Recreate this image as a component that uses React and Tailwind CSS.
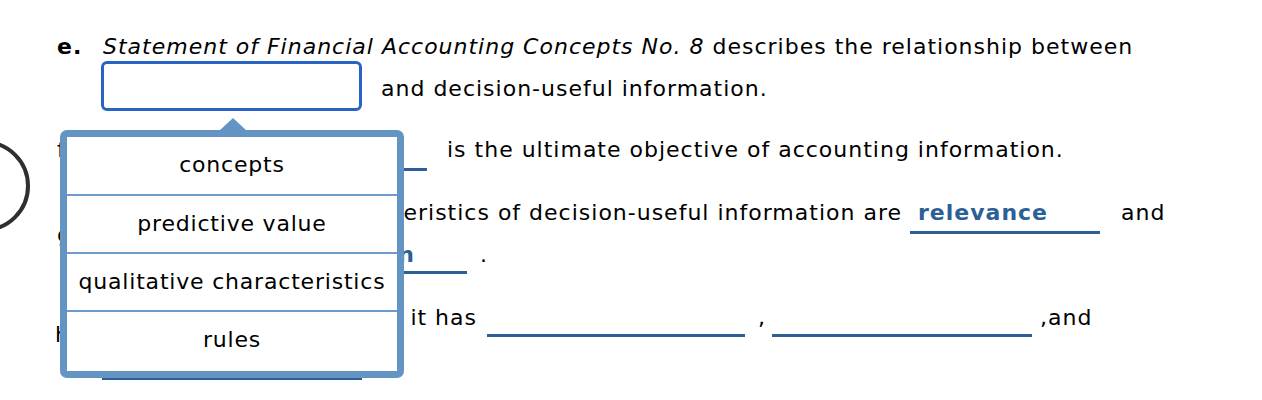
import React from "react";

const Blank = ({ w, className = "", children }) => (
  <span
    className={`flex items-start border-b-[3px] border-[#2b5f95] ${className}`}
    style={{ width: w }}
  >
    {children}
  </span>
);

export default function App() {
  return (
    <div
      className="relative w-[1262px] h-[400px] overflow-hidden bg-white text-black text-[22px] leading-none tracking-[1px]"
      style={{ fontFamily: '"DejaVu Sans", Verdana, sans-serif' }}
    >
      {/* partial circle at the left edge */}
      <svg className="absolute left-0 top-0" width="40" height="400">
        <circle cx="-16" cy="186" r="44" fill="none" stroke="#2f2f2f" strokeWidth="4" />
      </svg>

      <div className="flex flex-col pl-[57px]">
        {/* e line 1 */}
        <div className="flex h-[60px] items-start pt-[36px] whitespace-nowrap">
          <span className="w-[46px] font-bold">e.</span>
          <span>
            <i>Statement of Financial Accounting Concepts No. 8</i> describes the relationship between
          </span>
        </div>
        {/* e line 2 */}
        <div className="flex h-[52px] items-start pl-[44px] whitespace-nowrap">
          <span className="mt-[1px] block w-[261px] h-[50px] rounded-[6px] border-[3px] border-[#2864c6]" />
          <span className="ml-[19px] mt-[18px]">and decision-useful information.</span>
        </div>
        {/* f line */}
        <div className="flex h-[62px] items-start whitespace-nowrap">
          <span className="w-[46px] mt-[27px]">f.</span>
          <Blank w="324px" className="mt-[39px] h-[20px]" />
          <span className="ml-[20px] mt-[27px]">is the ultimate objective of accounting information.</span>
        </div>
        {/* g line 1 */}
        <div className="flex h-[66px] items-start whitespace-nowrap">
          <span className="w-[46px] mt-[50px]">g.</span>
          <span className="flex w-[799px] justify-end overflow-hidden mt-[28px]">
            The qualitative characteristics of decision-useful information are
          </span>
          <Blank w="190px" className="ml-[8px] mt-[28px] h-[32px]">
            <span className="pl-[8px] font-bold text-[#2c5f96]">relevance</span>
          </Blank>
          <span className="ml-[21px] mt-[28px]">and</span>
        </div>
        {/* g line 2 */}
        <div className="flex h-[40px] items-start pl-[46px] whitespace-nowrap">
          <Blank w="364px" className="mt-[4px] h-[30px] justify-end overflow-hidden">
            <span className="pr-[52px] font-bold text-[#2c5f96]">faithful representation</span>
          </Blank>
          <span className="ml-[13px] mt-[4px]">.</span>
        </div>
        {/* h line 1 */}
        <div className="flex h-[60px] items-start whitespace-nowrap">
          <span className="w-[46px] -ml-[2px] mr-[2px] mt-[44px]">h.</span>
          <span className="flex w-[374px] justify-end overflow-hidden mt-[27px]">
            Information is relevant if it has
          </span>
          <Blank w="258px" className="ml-[10px] mt-[27px] h-[30px]" />
          <span className="ml-[13px] mt-[27px]">,</span>
          <Blank w="260px" className="ml-[6px] mt-[27px] h-[30px]" />
          <span className="ml-[8px] mt-[27px]">,and</span>
        </div>
        {/* h line 2 */}
        <div className="flex h-[60px] items-start pl-[45px] whitespace-nowrap">
          <Blank w="260px" className="mt-[20px] h-[20px]" />
        </div>
      </div>

      {/* dropdown popup */}
      <div className="absolute left-[60px] top-[130px] w-[344px] tracking-[0.8px]">
        <svg className="absolute left-[159px] -top-[13px]" width="28" height="15">
          <polygon points="0,14 14,1 28,14" fill="#6494c3" />
        </svg>
        <div className="flex flex-col rounded-[7px] border-[7px] border-[#6494c3] bg-white">
          <div className="flex h-[57px] items-center justify-center pb-[2px]">concepts</div>
          <div className="h-[2px] bg-[#6f9bc8]" />
          <div className="flex h-[56px] items-center justify-center">predictive value</div>
          <div className="h-[2px] bg-[#6f9bc8]" />
          <div className="flex h-[56px] items-center justify-center">qualitative characteristics</div>
          <div className="h-[2px] bg-[#6f9bc8]" />
          <div className="flex h-[59px] items-center justify-center pb-[4px]">rules</div>
        </div>
      </div>
    </div>
  );
}
